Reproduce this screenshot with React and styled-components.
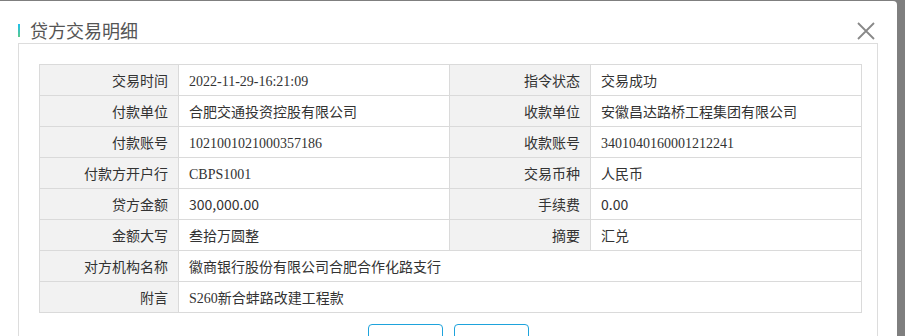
import styled, { createGlobalStyle } from 'styled-components';

const GlobalStyle = createGlobalStyle`
body{
  margin: 0;
  background: #7f7f7f;
  overflow: hidden;
}
`

const Modal = styled.div`
width: 897px;
height: 335px;
margin-top: 1px;
background: #fff;
border-top-right-radius: 4px;
font-family: "Noto Sans CJK SC", "Noto Sans", sans-serif;
overflow: hidden;
`

const Header = styled.div`
height: 42px;
box-sizing: border-box;
padding: 16px 21px 0 18px;
display: flex;
align-items: flex-start;
justify-content: space-between;
`

const Title = styled.h3`
margin: 0;
display: flex;
align-items: center;
height: 26px;
font-size: 18px;
font-weight: normal;
color: #555;
&::before{
  content: "";
  width: 2px;
  height: 13px;
  margin-right: 10px;
  background: linear-gradient(#1ec0ee, #5cc98a);
}
`

const Close = styled.button`
border: 0;
background: none;
padding: 0;
margin-top: 4px;
width: 20px;
height: 20px;
cursor: pointer;
svg{ display: block; }
`

const Panel = styled.div`
margin-left: 18px;
width: 860px;
box-sizing: border-box;
height: 300px;
border: 1px solid #ddd;
border-bottom: 0;
padding: 20px 16px 0 20px;
`

const Table = styled.table`
width: 822px;
border-collapse: collapse;
table-layout: fixed;
font-size: 14px;
color: #333;
td{
  height: 30px;
  border: 1px solid #dadada;
  padding: 0 10px;
  white-space: nowrap;
}
`

const Label = styled.td`
background: #f2f2f2;
text-align: right;
`

const Value = styled.td`
text-align: left;
font-family: ${p => p.$serif ? '"Liberation Serif", serif' : '"Noto Sans CJK SC", "Noto Sans", sans-serif'};
${p => p.$serif && 'padding-top: 4px !important; height: 26px !important;'}
`

const Serif = styled.span`
font-family: "Liberation Serif", serif;
`

const Buttons = styled.div`
display: flex;
justify-content: center;
gap: 11px;
margin-top: 11px;
margin-right: 4px;
`

const Button = styled.button`
width: 75px;
height: 30px;
border: 1px solid #1ea3dc;
border-radius: 4px;
background: #fff;
`

const rows = [
  ['交易时间', '2022-11-29-16:21:09', true, '指令状态', '交易成功', false],
  ['付款单位', '合肥交通投资控股有限公司', false, '收款单位', '安徽昌达路桥工程集团有限公司', false],
  ['付款账号', '1021001021000357186', true, '收款账号', '3401040160001212241', true],
  ['付款方开户行', 'CBPS1001', true, '交易币种', '人民币', false],
  ['贷方金额', '300,000.00', false, '手续费', '0.00', false],
  ['金额大写', '叁拾万圆整', false, '摘要', '汇兑', false],
]

const App = () => {
  return (
    <>
      <GlobalStyle />
      <Modal>
        <Header>
          <Title>贷方交易明细</Title>
          <Close aria-label="关闭">
            <svg width="20" height="20" viewBox="0 0 20 20">
              <path d="M2 2L18 18M18 2L2 18" stroke="#888" strokeWidth="1.8" fill="none" />
            </svg>
          </Close>
        </Header>
        <Panel>
          <Table>
            <colgroup>
              <col style={{ width: 139 }} />
              <col style={{ width: 271 }} />
              <col style={{ width: 141 }} />
              <col style={{ width: 271 }} />
            </colgroup>
            <tbody>
              {rows.map(r => (
                <tr key={r[0]}>
                  <Label>{r[0]}</Label>
                  <Value $serif={r[2]}>{r[1]}</Value>
                  <Label>{r[3]}</Label>
                  <Value $serif={r[5]}>{r[4]}</Value>
                </tr>
              ))}
              <tr>
                <Label>对方机构名称</Label>
                <Value colSpan={3}>徽商银行股份有限公司合肥合作化路支行</Value>
              </tr>
              <tr>
                <Label>附言</Label>
                <Value colSpan={3}><Serif>S260</Serif>新合蚌路改建工程款</Value>
              </tr>
            </tbody>
          </Table>
          <Buttons>
            <Button aria-label="确定" />
            <Button aria-label="打印" />
          </Buttons>
        </Panel>
      </Modal>
    </>
  )
}

export default App;
